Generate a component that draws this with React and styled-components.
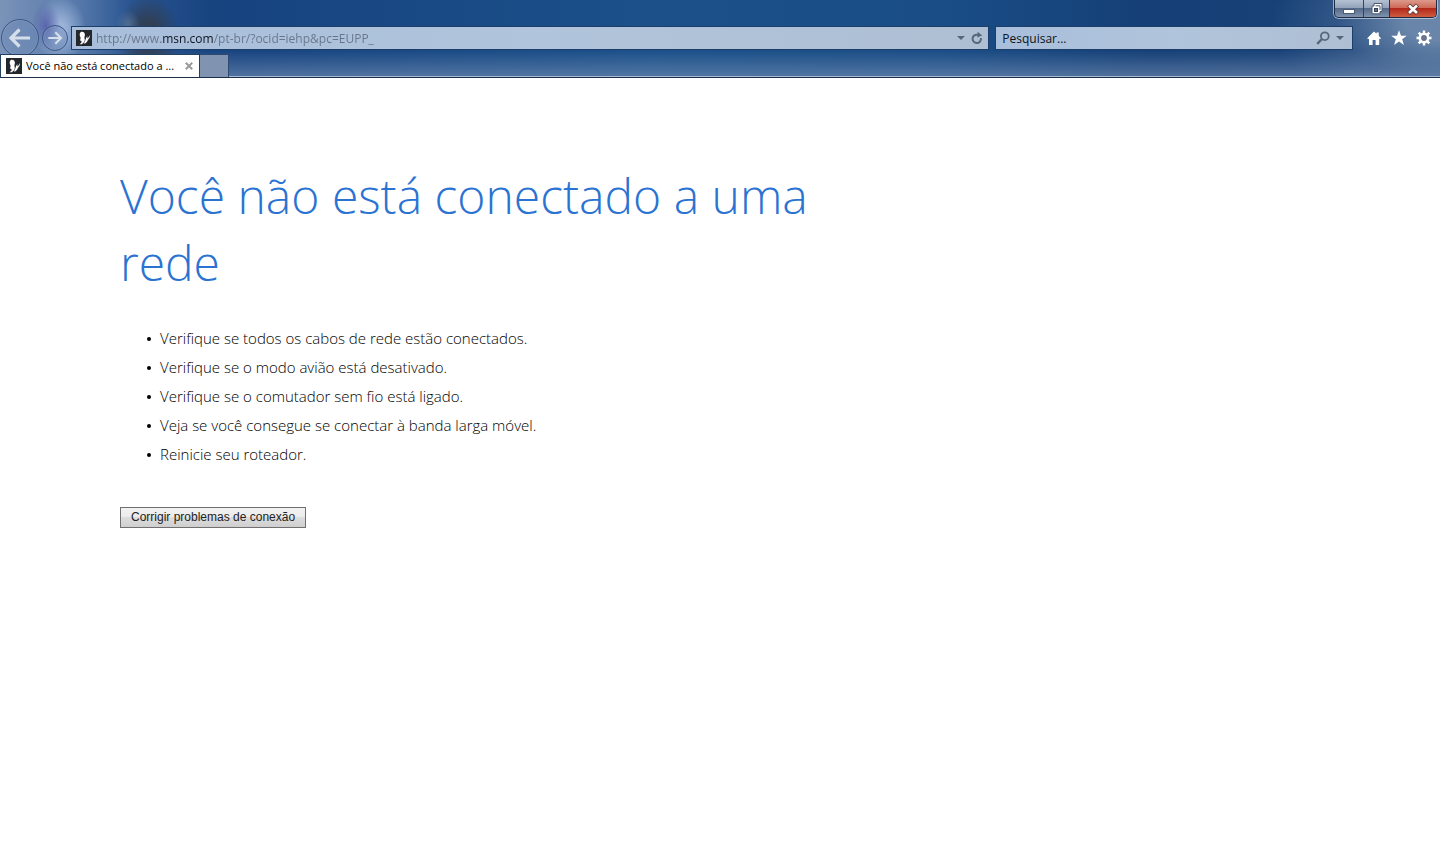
import React from 'react';
import styled, { createGlobalStyle } from 'styled-components';

const tips = [
    'Verifique se todos os cabos de rede estão conectados.',
    'Verifique se o modo avião está desativado.',
    'Verifique se o comutador sem fio está ligado.',
    'Veja se você consegue se conectar à banda larga móvel.',
    'Reinicie seu roteador.',
];

function Favicon () {
    return (
        <svg width="16" height="16" viewBox="0 0 16 16" aria-hidden="true">
            <rect width="16" height="16" fill="#23272b" />
            <path d="M5.200 1.800C7 1.200 8.800 2.400 8.900 4.400C9 5.800 8.300 6.800 8.400 7.900C8.900 9.200 9 10.800 8 12.200L5.800 14.200H3.400C4.600 13.400 5.600 12.600 6 11.400C4.400 11.300 3.800 10.200 4.400 9C4.600 8.200 4.700 7.700 4.300 6.900C3.300 5.200 3.400 2.600 5.200 1.800Z" fill="#fff" />
            <path d="M14 5C14 7.400 12.900 8.900 11.900 10C11.500 11.600 10.400 12.800 8.800 13.600H7.800C8.700 12.200 9.300 11 9.600 9.600C10 8.200 10.600 6.900 11.500 6C11.300 7 11.200 7.800 11.400 8.400C12.500 7.500 13.300 6.400 14 5Z" fill="#fff" />
        </svg>
    )
};

function Arrow ({ size, flip }) {
    return (
        <svg width={size} height={size} viewBox="0 0 24 24" aria-hidden="true">
            <path
                d="M11.500 3.500L3 12L11.500 20.500M3.500 12H22"
                transform={flip ? 'rotate(180 12 12)' : undefined}
                fill="none"
                stroke="#d5dfec"
                strokeWidth="3.2"
            />
        </svg>
    )
};

function Caret () {
    return (
        <svg width="8" height="4" viewBox="0 0 8 4" aria-hidden="true">
            <path d="M0 0H8L4 4Z" fill="#56677a" />
        </svg>
    )
};

function WindowButtons () {
    return (
        <Controls>
            <ControlButton type="button" $width="28px" aria-label="Minimizar">
                <svg width="12" height="12" viewBox="0 0 12 12">
                    <rect x=".5" y="6.500" width="11" height="4" fill="#fff" stroke="#4b5a70" />
                </svg>
            </ControlButton>
            <ControlButton type="button" $width="26px" aria-label="Restaurar">
                <svg width="14" height="14" viewBox="0 0 14 14">
                    <path d="M4 1.500H12V9.500H10V11.800H2V4H4Z" fill="#fff" stroke="#4b5a70" />
                    <path d="M5.500 3.800H10V8" fill="none" stroke="#4b5a70" />
                    <rect x="4.500" y="6.500" width="3" height="3" fill="#5c6c86" stroke="#34425a" />
                </svg>
            </ControlButton>
            <ControlButton type="button" $width="47px" $close aria-label="Fechar">
                <svg width="12" height="12" viewBox="0 0 12 12">
                    <path d="M1.500 2L10.500 10.500M10.500 2L1.500 10.500" stroke="#5e3a3c" strokeWidth="4.400" />
                    <path d="M2 2.500L10 10M10 2.500L2 10" stroke="#fff" strokeWidth="2.600" />
                </svg>
            </ControlButton>
        </Controls>
    )
};

function Toolbar () {
    return (
        <NavRow>
            <History>
                <RoundButton type="button" $size="38px" aria-label="Voltar"><Arrow size={24} /></RoundButton>
                <RoundButton type="button" $size="26px" aria-label="Avançar"><Arrow size={16} flip /></RoundButton>
            </History>
            <Field $grow={908} $end="5px">
                <Favicon />
                <AddressInput type="text" aria-label="Endereço" defaultValue="http://www.msn.com/pt-br/?ocid=iehp&pc=EUPP_" />
                <PlainButton type="button" aria-label="Mostrar endereços"><Caret /></PlainButton>
                <PlainButton type="button" aria-label="Atualizar">
                    <svg width="12" height="14" viewBox="0 0 12 14">
                        <path d="M9.900 7.200A4.200 4.200 0 1 1 6.800 3.800" fill="none" stroke="#56677a" strokeWidth="2" />
                        <path d="M6.600 .8L11.200 4.600L6.200 6.400Z" fill="#56677a" />
                    </svg>
                </PlainButton>
            </Field>
            <Field $grow={344} $end="8px">
                <SearchInput type="text" aria-label="Pesquisar" placeholder="Pesquisar..." />
                <PlainButton type="button" aria-label="Buscar">
                    <svg width="14" height="14" viewBox="0 0 14 14">
                        <circle cx="8.800" cy="5.200" r="3.900" fill="none" stroke="#56677a" strokeWidth="1.800" />
                        <path d="M6 8L1.200 12.800" stroke="#56677a" strokeWidth="2.400" />
                    </svg>
                </PlainButton>
                <PlainButton type="button" aria-label="Provedores de pesquisa"><Caret /></PlainButton>
            </Field>
            <Tools>
                <PlainButton type="button" aria-label="Página inicial">
                    <svg width="16" height="16" viewBox="0 0 16 16">
                        <path d="M8 1.500L10.500 3.800V2.500H12.800V6L15 8.200L14 9.300L13.200 8.600V15H9.600V10H6.600V15H3V8.600L2.200 9.300L1.200 8.200Z" fill="#fff" />
                    </svg>
                </PlainButton>
                <PlainButton type="button" aria-label="Favoritos">
                    <svg width="16" height="16" viewBox="0 0 16 16">
                        <path d="M8 .3L10 5.800H15.800L11.200 9.300L12.900 15L8 11.600L3.100 15L4.800 9.300L.2 5.800H6Z" fill="#fff" />
                    </svg>
                </PlainButton>
                <PlainButton type="button" aria-label="Ferramentas">
                    <svg width="16" height="16" viewBox="0 0 16 16">
                        <path d="M8 .5V15.500M.5 8H15.500M2.700 2.700L13.300 13.300M13.300 2.700L2.700 13.300" stroke="#fff" strokeWidth="2.400" />
                        <circle cx="8" cy="8" r="4.200" fill="#66758c" stroke="#fff" strokeWidth="2.600" />
                    </svg>
                </PlainButton>
            </Tools>
        </NavRow>
    )
};

function Tabs () {
    return (
        <TabRow>
            <Tab>
                <Favicon />
                <TabTitle href="#rede">Você não está conectado a ...</TabTitle>
                <PlainButton type="button" aria-label="Fechar guia">
                    <svg width="8" height="8" viewBox="0 0 8 8">
                        <path d="M.8 .8L7.200 7.200M7.200 .8L.8 7.200" stroke="#9a9a9a" strokeWidth="2" />
                    </svg>
                </PlainButton>
            </Tab>
            <NewTab type="button" aria-label="Nova guia" />
        </TabRow>
    )
};

function App () {
    return (
        <>
            <GlobalStyle />
            <Header>
                <WindowButtons />
                <Toolbar />
                <Tabs />
            </Header>
            <Page id="rede">
                <Title>Você não está conectado a uma rede</Title>
                <TipList>
                    {tips.map(tip => <Tip key={tip}>{tip}</Tip>)}
                </TipList>
                <FixButton type="button">Corrigir problemas de conexão</FixButton>
            </Page>
        </>
    )
};

const GlobalStyle = createGlobalStyle`
    *{
        box-sizing:border-box;
    }

    body{
        margin:0;
        background:#fff;
        font-family:'Open Sans', 'Noto Sans', sans-serif;
    }

    svg{
        display:block;
        flex:none;
    }
`
const Header = styled.header`
    display:flex;
    flex-direction:column;
    overflow:hidden;
    border-bottom:1px solid #1c2f4b;
    box-shadow:inset 0 -1px 0 #a9bbd2;
    background:
        radial-gradient(ellipse 14px 24px at 46px 26px, rgba(72, 76, 160, 0.7), transparent),
        radial-gradient(ellipse 26px 34px at 60px 30px, rgba(170, 192, 228, 0.8) 20%, transparent),
        radial-gradient(ellipse 12px 14px at 128px 24px, rgba(110, 140, 175, 0.5), transparent),
        radial-gradient(ellipse 32px 42px at 148px 36px, rgba(50, 60, 76, 0.9) 30%, transparent),
        linear-gradient(to bottom, transparent 50px, rgba(120, 145, 182, 0.6) 77px),
        radial-gradient(ellipse 170px 90px at 100% 30%, rgba(125, 150, 182, 0.8) 20%, rgba(90, 120, 160, 0.4) 60%, transparent),
        linear-gradient(to right, #7a93b8 0, #5578aa 80px, #2a5592 130px, #17437f 210px, #1b5089 45%, #1a4d86 65%, #153f76 80%, #1a4377 100%);
`
const Controls = styled.div`
    display:flex;
    align-self:flex-end;
    height:18px;
    margin-right:3px;
    border:1px solid #1f2c42;
    border-top:0;
    border-radius:0 0 5px 5px;
    box-shadow:0 0 0 1px rgba(200, 214, 232, 0.7);
    overflow:hidden;
`
const ControlButton = styled.button`
    display:flex;
    align-items:center;
    justify-content:center;
    width:${props => props.$width};
    padding:0;
    border:0;
    border-left:1px solid ${props => props.$close ? '#4b2630' : '#33445f'};
    background:${props => props.$close
        ? 'linear-gradient(#dc9a8c 0, #cf6a57 45%, #b3291a 50%, #cf5c40 100%)'
        : 'linear-gradient(#b4c1d2 0, #93a3ba 45%, #566a89 50%, #8094af 100%)'};

    &:first-child{
        border-left:0;
    }
`
const NavRow = styled.div`
    display:flex;
    align-items:center;
    height:40px;
    padding:0 8px 0 1px;
`
const History = styled.div`
    display:flex;
    flex:none;
    align-items:center;
    gap:3px;
    margin-right:3px;
`
const RoundButton = styled.button`
    display:flex;
    align-items:center;
    justify-content:center;
    width:${props => props.$size};
    height:${props => props.$size};
    padding:0;
    border:1px solid #3c5885;
    border-radius:50%;
    background:rgba(110, 138, 182, 0.4);
    box-shadow:inset 0 0 0 1px rgba(170, 192, 222, 0.2);
`
const Field = styled.div`
    display:flex;
    flex:${props => props.$grow} 1 0;
    align-items:center;
    gap:6px;
    height:24px;
    margin-right:6px;
    padding:0 ${props => props.$end} 0 4px;
    border:1px solid #1d3d6b;
    background:linear-gradient(to right, #a9bedb, #b0c4db 50%, #aebfd3);
`
const AddressInput = styled.input`
    flex:1;
    min-width:0;
    height:20px;
    margin-left:-2px;
    padding:0;
    border:0;
    outline:0;
    font:12px 'Open Sans', 'Noto Sans', sans-serif;
    color:#66758a;
    background:linear-gradient(to right, #66758a 65px, #0c1420 65px, #0c1420 118px, #66758a 118px);
    background-clip:text;
    -webkit-text-fill-color:transparent;
`
const SearchInput = styled.input`
    flex:1;
    min-width:0;
    height:20px;
    padding:0 2px;
    border:0;
    outline:0;
    font:12px 'Open Sans', 'Noto Sans', sans-serif;
    color:#0c1420;
    background:transparent;

    &::placeholder{
        color:#0c1420;
    }
`
const PlainButton = styled.button`
    flex:none;
    padding:0;
    border:0;
    background:transparent;
`
const Tools = styled.div`
    display:flex;
    flex:none;
    gap:9px;
    margin-left:7px;
`
const TabRow = styled.div`
    display:flex;
    z-index:1;
    height:23px;
    margin-top:-4px;
`
const Tab = styled.div`
    display:flex;
    align-items:center;
    gap:4px;
    width:200px;
    padding:0 6px 0 5px;
    border:1px solid #24415f;
    border-bottom:0;
    background:#fff;
`
const TabTitle = styled.a`
    flex:1;
    font-size:11px;
    line-height:20px;
    color:#000;
    text-decoration:none;
    white-space:nowrap;
`
const NewTab = styled.button`
    width:29px;
    padding:0;
    border:1px solid #2d4a70;
    border-width:1px 1px 0 0;
    background:#8094b2;
`
const Page = styled.main`
    max-width:850px;
    padding:84px 0 40px 120px;
`
const Title = styled.h1`
    margin:0;
    font-size:48px;
    font-weight:300;
    line-height:67px;
    color:#2b73d2;
`
const TipList = styled.ul`
    margin:28px 0 35px;
    padding-left:27px;
    list-style:none;
    font-size:15px;
    font-weight:300;
    line-height:29px;
    color:#000;
`
const Tip = styled.li`
    display:flex;
    align-items:center;
    gap:9px;

    &::before{
        content:'';
        width:4px;
        height:4px;
        border-radius:50%;
        background:#000;
    }
`
const FixButton = styled.button`
    height:21px;
    padding:0 10px;
    border:1px solid #707070;
    background:linear-gradient(#f2f2f2, #ebebeb 50%, #dddddd 50%, #cfcfcf);
    font:12px 'Liberation Sans', Arial, sans-serif;
    color:#222;
`
export default App;
